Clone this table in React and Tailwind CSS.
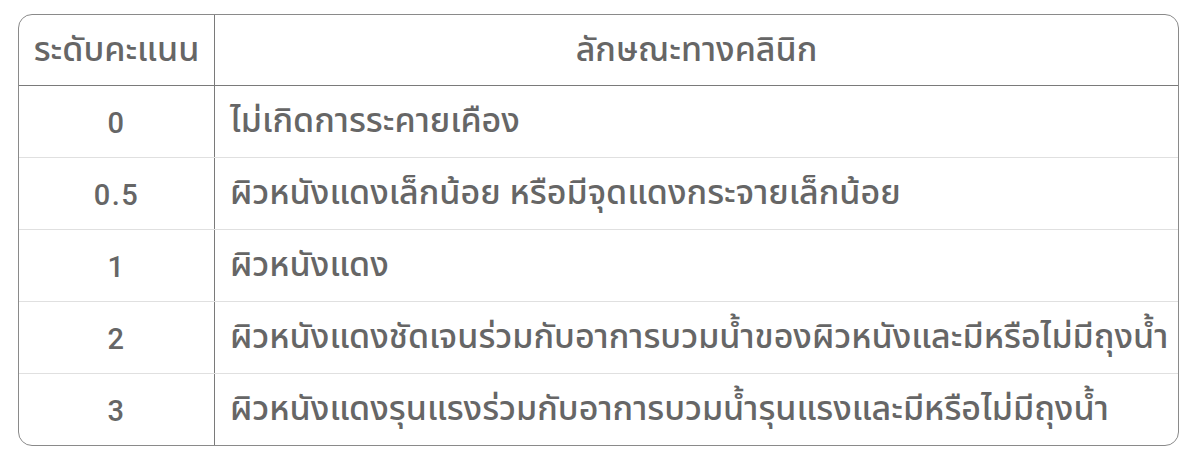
import React from "react";

const rows = [
  ["0", "ไม่เกิดการระคายเคือง"],
  ["0.5", "ผิวหนังแดงเล็กน้อย หรือมีจุดแดงกระจายเล็กน้อย"],
  ["1", "ผิวหนังแดง"],
  ["2", "ผิวหนังแดงชัดเจนร่วมกับอาการบวมน้ำของผิวหนังและมีหรือไม่มีถุงน้ำ"],
  ["3", "ผิวหนังแดงรุนแรงร่วมกับอาการบวมน้ำรุนแรงและมีหรือไม่มีถุงน้ำ"],
];

export default function App() {
  return (
    <div
      className="w-[1200px] h-[460px] bg-white pt-[14px] pl-[18px] pr-[21px]"
      style={{ fontFamily: '"Noto Sans Thai", "Noto Sans", sans-serif' }}
    >
      <div className="border border-[#8a8a8a] rounded-[14px] overflow-hidden text-[#666666] text-[34px] font-medium">
        <div className="flex h-[71px] border-b border-[#7a7a7a]">
          <div className="w-[196px] shrink-0 flex items-center justify-center border-r border-[#7a7a7a]">
            ระดับคะแนน
          </div>
          <div className="flex-1 flex items-center justify-center">ลักษณะทางคลินิก</div>
        </div>
        {rows.map(([a, b], i) => (
          <div
            key={a}
            className={
              i < rows.length - 1
                ? "flex h-[72px] border-b border-[#e0e0e0]"
                : "flex h-[71px]"
            }
          >
            <div
              className="w-[196px] shrink-0 flex items-center justify-center border-r border-[#7a7a7a] text-[29px] font-medium tracking-[1.5px] pt-[4px]"
              style={{ fontFamily: 'Roboto, Arial, sans-serif' }}
            >
              {a}
            </div>
            <div className="flex-1 flex items-center pl-[15px] whitespace-nowrap">{b}</div>
          </div>
        ))}
      </div>
    </div>
  );
}
